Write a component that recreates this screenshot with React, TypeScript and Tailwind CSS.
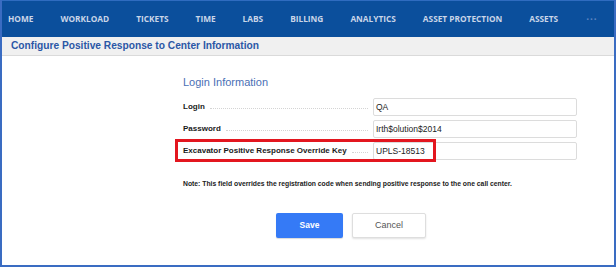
const navItems = ['HOME', 'WORKLOAD', 'TICKETS', 'TIME', 'LABS', 'BILLING', 'ANALYTICS', 'ASSET PROTECTION', 'ASSETS']

const fields = [
  { label: 'Login', value: 'QA' },
  { label: 'Password', value: 'Irth$olution$2014' },
  { label: 'Excavator Positive Response Override Key', value: 'UPLS-18513', highlight: true },
]

export default function App() {
  return (
    <div className="w-[616px] h-[267px] bg-white border-2 border-[#3a6cc2] border-t-0 overflow-hidden flex flex-col" style={{ fontFamily: '"Liberation Sans", Arial, sans-serif' }}>
      <nav className="h-[37px] shrink-0 bg-[#0b4f9c] border-t border-[#2f6cc0] flex items-center pl-[6px] gap-[27px]" style={{ fontFamily: '"Open Sans", sans-serif' }}>
        {navItems.map((item) => (
          <span key={item} className="text-[8.3px] font-bold text-[#c9d5e8] whitespace-nowrap">{item}</span>
        ))}
        <span className="text-[10px] font-bold text-[#5f86c2] tracking-[1px] ml-[1px]">···</span>
      </nav>

      <div className="h-[19px] shrink-0 bg-[#f0f0f0] border-b border-[#dadada] flex items-center pl-[9px]">
        <h1 className="text-[10.2px] font-bold text-[#2b57a6]">Configure Positive Response to Center Information</h1>
      </div>

      <div className="flex-1 pl-[181px] pt-[19px]">
        <h2 className="text-[11px] text-[#4a6fb5] leading-[14px]">Login Information</h2>

        <div className="mt-[9px] w-[394px] flex flex-col gap-[4px]">
          {fields.map((f) => (
            <div key={f.label} className="relative flex items-center h-[18px]">
              <span className="text-[8px] font-bold text-[#1a1a1a] whitespace-nowrap">{f.label}</span>
              <span className="flex-1 mx-[5px] mt-[3px] border-b border-dotted border-[#d4d4d4]" />
              <div className="w-[204px] h-[18px] border border-[#dcdcdc] rounded-[2px] flex items-center px-[2px] text-[8.5px] text-[#222]">
                {f.value}
              </div>
              {f.highlight && (
                <div className="absolute -left-[8px] -top-[3px] w-[261px] h-[23px] border-[3px] border-[#e3161f] pointer-events-none" />
              )}
            </div>
          ))}
        </div>

        <p className="mt-[19px] text-[6.8px] font-bold text-[#222] leading-[9px]">
          Note: This field overrides the registration code when sending positive response to the one call center.
        </p>

        <div className="mt-[25px] ml-[93px] flex gap-[9px]">
          <button className="w-[67px] h-[25px] rounded-[2px] bg-[#357af6] text-white text-[8.5px] font-bold shadow-[0_1px_1px_rgba(0,0,0,0.15)]">Save</button>
          <button className="w-[74px] h-[25px] rounded-[2px] bg-white border border-[#dedede] text-[#555] text-[9px] shadow-[0_1px_2px_rgba(0,0,0,0.12)]">Cancel</button>
        </div>
      </div>
    </div>
  )
}
